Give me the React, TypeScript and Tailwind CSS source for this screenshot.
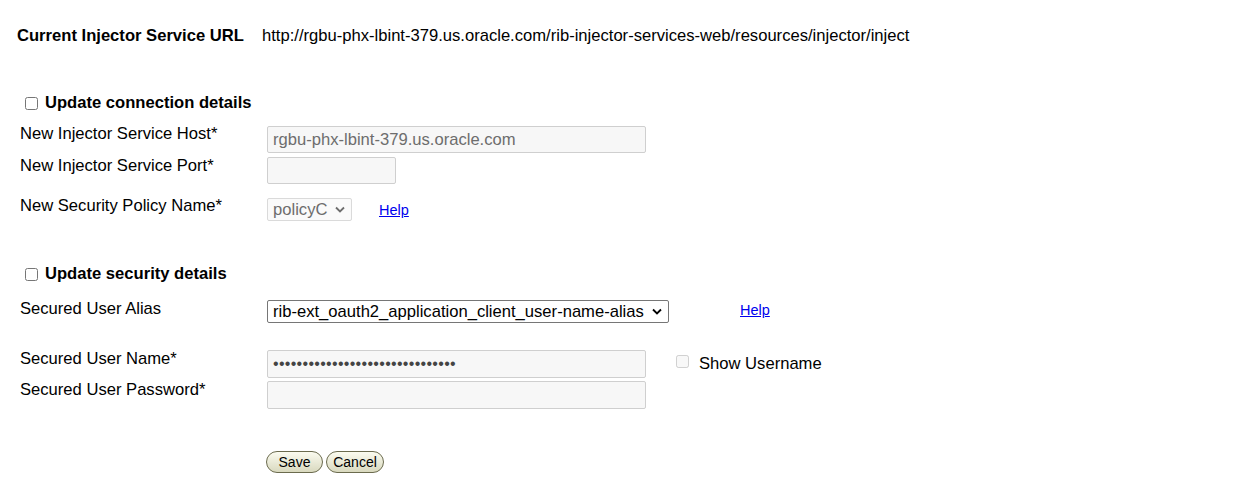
import React from "react";

const Chevron: React.FC<{ color?: string }> = ({ color = "#000" }) => (
  <svg width="10" height="7" viewBox="0 0 10 7" className="shrink-0">
    <path d="M1 1.5 L5 5.5 L9 1.5" fill="none" stroke={color} strokeWidth="1.8" />
  </svg>
);

const Label: React.FC<{ children: React.ReactNode }> = ({ children }) => (
  <div className="w-[247px] shrink-0 leading-[18px]">{children}</div>
);

const HelpLink: React.FC = () => (
  <a href="#" className="text-[14.5px] text-[#0000ee] underline">
    Help
  </a>
);

const App: React.FC = () => {
  return (
    <div
      className="h-[486px] bg-white text-[16.6px] leading-[18px] text-black"
      style={{ fontFamily: '"Liberation Sans", Arial, sans-serif' }}
    >
      {/* Current URL */}
      <div className="flex pl-[17px] pt-[27px]">
        <div className="w-[245px] shrink-0 font-bold">Current Injector Service URL</div>
        <div>http://rgbu-phx-lbint-379.us.oracle.com/rib-injector-services-web/resources/injector/inject</div>
      </div>

      {/* Connection details */}
      <div className="mt-[49px] flex items-center pl-[25px]">
        <input type="checkbox" className="m-0 h-[13px] w-[13px]" />
        <span className="ml-[7px] font-bold">Update connection details</span>
      </div>

      <div className="pl-[20px]">
        <div className="mt-[13px] flex items-start">
          <Label>New Injector Service Host*</Label>
          <div className="mt-[1px] flex h-[27px] w-[379px] items-center rounded-[2px] border border-[#cfcfcf] bg-[#f7f7f7] px-[5px] text-[#6d6d6d]">
            rgbu-phx-lbint-379.us.oracle.com
          </div>
        </div>
        <div className="mt-[4px] flex items-start">
          <Label>New Injector Service Port*</Label>
          <div className="h-[27px] w-[129px] rounded-[2px] border border-[#cfcfcf] bg-[#f7f7f7]" />
        </div>
        <div className="mt-[13px] flex items-start">
          <Label>New Security Policy Name*</Label>
          <div className="mt-[1px] flex h-[23px] w-[85px] items-center justify-between rounded-[2px] border border-[#dadada] bg-[#fafafa] pl-[5px] pr-[6px] text-[#6d6d6d]">
            <span>policyC</span>
            <Chevron color="#6d6d6d" />
          </div>
          <div className="ml-[27px] mt-[4px]">
            <HelpLink />
          </div>
        </div>
      </div>

      {/* Security details */}
      <div className="mt-[44px] flex items-center pl-[25px]">
        <input type="checkbox" className="m-0 h-[13px] w-[13px]" />
        <span className="ml-[7px] font-bold">Update security details</span>
      </div>

      <div className="pl-[20px]">
        <div className="mt-[17px] flex items-start">
          <Label>Secured User Alias</Label>
          <div className="flex h-[23px] w-[402px] items-center justify-between rounded-[2px] border border-[#767676] bg-white pl-[5px] pr-[6px]">
            <span>rib-ext_oauth2_application_client_user-name-alias</span>
            <Chevron />
          </div>
          <div className="ml-[71px] mt-[1px]">
            <HelpLink />
          </div>
        </div>

        <div className="mt-[27px] flex items-start">
          <Label>Secured User Name*</Label>
          <div className="flex h-[28px] w-[379px] items-center rounded-[2px] border border-[#cfcfcf] bg-[#f7f7f7] px-[5px] text-[16px] tracking-[0.3px] text-[#444]">
            {"•".repeat(31)}
          </div>
          <div className="ml-[30px] mt-[5px] flex items-start">
            <input type="checkbox" disabled className="m-0 h-[13px] w-[13px]" />
            <span className="ml-[10px]">Show Username</span>
          </div>
        </div>
        <div className="mt-[3px] flex items-start">
          <Label>Secured User Password*</Label>
          <div className="h-[28px] w-[379px] rounded-[2px] border border-[#cfcfcf] bg-[#f7f7f7]" />
        </div>

        <div className="mt-[42px] flex gap-[3px] pl-[246px]">
          <button className="h-[22px] w-[57px] rounded-full border border-[#6b6b4e] bg-gradient-to-b from-[#fbfbf0] to-[#d9d9bf] text-[14px] leading-[18px]">
            Save
          </button>
          <button className="h-[22px] w-[58px] rounded-full border border-[#6b6b4e] bg-gradient-to-b from-[#fbfbf0] to-[#d9d9bf] text-[14px] leading-[18px]">
            Cancel
          </button>
        </div>
      </div>
    </div>
  );
};

export default App;
